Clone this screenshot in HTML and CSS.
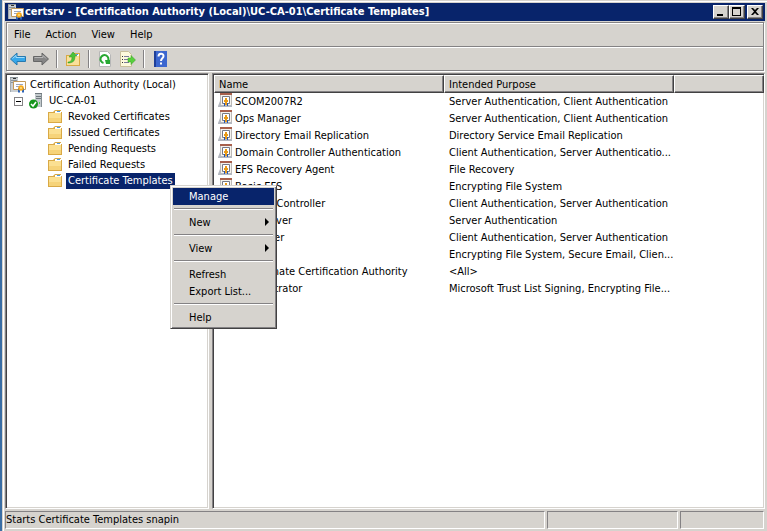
FILE: index.html
```
<!DOCTYPE html>
<html lang="en">
<head>
    <meta charset="UTF-8">
    <meta name="viewport" content="width=device-width, initial-scale=1.0">
    <title>certsrv</title>
    <link rel="stylesheet" href="styles.css">
</head>
<body>
    <svg class="defs">
        <symbol id="i-ca" viewBox="0 0 16 16">
            <path d="M0 0h8v15H0z" fill="#c9ced2"/><path d="M0 0h8v1H0zM1 3h6v1H1zM1 5h3v1H1z" fill="#8b949a"/><path d="M3 1h3v1H3z" fill="#333"/><path d="M0 1h1v14H0z" fill="#a2aaaf"/>
            <path d="M3.500 4.500h12v8h-12z" fill="#fff" stroke="#c39a5b"/><path d="M6 7.500h7M6 9.500h3" stroke="#9aa6c0"/>
            <path d="M8 11h2v5l-1-1-1 1zM12 11h2v5l-1-1-1 1z" fill="#2d63b8"/><circle cx="11" cy="11" r="2.800" fill="#f5a81c"/><circle cx="11" cy="11" r="1" fill="#ffe184"/>
        </symbol>
        <symbol id="i-server" viewBox="0 0 16 16">
            <path d="M6 0h7v14H6z" fill="#c3cacd"/><path d="M6 0h7v1H6zM7 3h5v1H7zM7 5h5v1H7z" fill="#70797e"/><path d="M12 1h1v13h-1z" fill="#858e93"/><path d="M10 9h1v2h-1z" fill="#4ad24a"/>
            <circle cx="4.500" cy="11" r="4.500" fill="#15951c"/><path d="M2 11l2 2 3-4" stroke="#fff" stroke-width="1.500" fill="none"/>
        </symbol>
        <symbol id="i-folder" viewBox="0 0 16 16">
            <path d="M0 3h5l2-2h6v2h1v11H0z" fill="#d9a945"/><path d="M1 4h12v9H1z" fill="#fbe092"/><path d="M1 9h12v4H1z" fill="#f6d379"/><path d="M7 2h6v2H7z" fill="#fff"/><path d="M9 2h3v1H9z" fill="#4d9be0"/>
        </symbol>
        <symbol id="i-template" viewBox="0 0 14 16">
            <path d="M2 1h12v12H2z" fill="#f4f2ee"/><path d="M2 1h1v11H2zM13 1h1v12h-1z" fill="#bdb9b6"/><path d="M2 0h12v2H2z" fill="#a8604c"/><path d="M0 13l2-5v4h12v2H0z" fill="#b4b8c0"/><path d="M4.500 3.500h7v7h-7z" fill="#fff" stroke="#777a86"/><path d="M6 10h1v3H6zM9 10h1v3H9z" fill="#2857b0"/><path d="M7 5h2v2h1v2H9v3H7V9H6V7h1z" fill="#e89a16"/>
        </symbol>
        <symbol id="i-back" viewBox="0 0 16 16"><path d="M.500 8L7 2v3.500h8.500v5H7V14z" fill="#36a7ea" stroke="#2879ae"/><path d="M2.500 7.500L6 4.500v2h8.500" fill="none" stroke="#a2dcfa"/></symbol>
        <symbol id="i-next" viewBox="0 0 16 16"><path d="M15.500 8L9 2v3.500H.500v5H9V14z" fill="#858585" stroke="#666"/><path d="M1.500 6.500H10v-2l3 3" fill="none" stroke="#b8b8b8"/></symbol>
        <symbol id="i-up" viewBox="0 0 16 16"><path d="M1 4h7l1-2h6v13H1z" fill="#d9a945"/><path d="M2 5h12v9H2z" fill="#fae09a"/><path d="M10 3h4v2h-4z" fill="#fff"/><path d="M11 3h2v1h-2z" fill="#4d9be0"/><path d="M3 11c3 0 4-2 4-5H4L8 1l4 4H10c0 5-2 7-7 7z" fill="#4cc237" stroke="#2f9424" stroke-width=".5"/></symbol>
        <symbol id="i-refresh" viewBox="0 0 16 16"><path d="M2.500.500h8l3 3v12h-11z" fill="#fff" stroke="#b7b7b7"/><path d="M6.500 12A4 4 0 1 1 11 10" fill="none" stroke="#28a832" stroke-width="2"/><path d="M8 9h5v4H9z" fill="#28a832"/></symbol>
        <symbol id="i-export" viewBox="0 0 16 16"><path d="M.500.500h8l3 3v12h-11z" fill="#fdf9dd" stroke="#c9bf9c"/><path d="M2 5h1v1H2zM2 8h1v1H2zM2 11h1v1H2z" fill="#333"/><path d="M4 5.500h5M4 8.500h4M4 11.500h5" stroke="#7c7c9c"/><path d="M8 7h3V4.500L15.500 9 11 13.500V11H8z" fill="#58cf3d" stroke="#369c27" stroke-width=".5"/></symbol>
        <symbol id="i-help" viewBox="0 0 16 16"><path d="M2 0h13v16H2z" fill="#3b66cf"/><path d="M2 0h2v16H2z" fill="#1f3f98"/><path d="M6.500 5.500c0-3.500 5-3.500 5-.5C11.500 7.500 9 7 9 10" fill="none" stroke="#fff" stroke-width="2"/><path d="M8 11.500h2v2H8z" fill="#fff"/></symbol>
    </svg>

    <div class="window">
        <header class="titlebar">
            <svg class="icon"><use href="#i-ca"/></svg>
            <h1>certsrv - [Certification Authority (Local)\UC-CA-01\Certificate Templates]</h1>
            <div class="controls">
                <button aria-label="Minimize"><svg viewBox="0 0 12 10"><path d="M2 7h6v2H2z"/></svg></button>
                <button aria-label="Maximize"><svg viewBox="0 0 12 10"><path d="M1 0h9v9H1zM2 2v6h7V2z" fill-rule="evenodd"/></svg></button>
                <button class="close" aria-label="Close"><svg viewBox="0 0 12 10"><path d="M2 1h2l2 2 2-2h2L7 4.500 10 8H8L6 6 4 8H2l3-3.500z"/></svg></button>
            </div>
        </header>

        <div class="bars">
            <nav class="menubar">
                <button>File</button>
                <button>Action</button>
                <button>View</button>
                <button>Help</button>
            </nav>
            <div class="toolbar">
                <button aria-label="Back"><svg class="icon"><use href="#i-back"/></svg></button>
                <button aria-label="Forward"><svg class="icon"><use href="#i-next"/></svg></button>
                <i class="sep"></i>
                <button aria-label="Up one level"><svg class="icon"><use href="#i-up"/></svg></button>
                <i class="sep"></i>
                <button aria-label="Refresh"><svg class="icon"><use href="#i-refresh"/></svg></button>
                <button aria-label="Export List"><svg class="icon"><use href="#i-export"/></svg></button>
                <i class="sep"></i>
                <button aria-label="Help"><svg class="icon"><use href="#i-help"/></svg></button>
            </div>
        </div>

        <main class="panes">
            <div class="pane tree">
                <ul>
                    <li class="root"><svg class="icon"><use href="#i-ca"/></svg><span>Certification Authority (Local)</span></li>
                    <li class="server"><button class="toggle" aria-label="Collapse"></button><svg class="icon"><use href="#i-server"/></svg><span>UC-CA-01</span></li>
                    <li class="folder"><svg class="icon"><use href="#i-folder"/></svg><span>Revoked Certificates</span></li>
                    <li class="folder"><svg class="icon"><use href="#i-folder"/></svg><span>Issued Certificates</span></li>
                    <li class="folder"><svg class="icon"><use href="#i-folder"/></svg><span>Pending Requests</span></li>
                    <li class="folder"><svg class="icon"><use href="#i-folder"/></svg><span>Failed Requests</span></li>
                    <li class="folder selected"><svg class="icon"><use href="#i-folder"/></svg><span>Certificate Templates</span>
                        <div class="menu">
                            <button class="on">Manage</button>
                            <hr>
                            <button class="sub">New</button>
                            <hr>
                            <button class="sub">View</button>
                            <hr>
                            <button>Refresh</button>
                            <button>Export List...</button>
                            <hr>
                            <button>Help</button>
                        </div>
                    </li>
                </ul>
            </div>
            <div class="pane list">
                <table>
                    <thead>
                        <tr><th class="name">Name</th><th class="purpose">Intended Purpose</th><th></th></tr>
                    </thead>
                    <tbody>
                        <tr><td><svg class="icon"><use href="#i-template"/></svg>SCOM2007R2</td><td>Server Authentication, Client Authentication</td><td></td></tr>
                        <tr><td><svg class="icon"><use href="#i-template"/></svg>Ops Manager</td><td>Server Authentication, Client Authentication</td><td></td></tr>
                        <tr><td><svg class="icon"><use href="#i-template"/></svg>Directory Email Replication</td><td>Directory Service Email Replication</td><td></td></tr>
                        <tr><td><svg class="icon"><use href="#i-template"/></svg>Domain Controller Authentication</td><td>Client Authentication, Server Authenticatio...</td><td></td></tr>
                        <tr><td><svg class="icon"><use href="#i-template"/></svg>EFS Recovery Agent</td><td>File Recovery</td><td></td></tr>
                        <tr><td><svg class="icon"><use href="#i-template"/></svg>Basic EFS</td><td>Encrypting File System</td><td></td></tr>
                        <tr><td><svg class="icon"><use href="#i-template"/></svg>Domain Controller</td><td>Client Authentication, Server Authentication</td><td></td></tr>
                        <tr><td><svg class="icon"><use href="#i-template"/></svg>Web Server</td><td>Server Authentication</td><td></td></tr>
                        <tr><td><svg class="icon"><use href="#i-template"/></svg>Computer</td><td>Client Authentication, Server Authentication</td><td></td></tr>
                        <tr><td><svg class="icon"><use href="#i-template"/></svg>User</td><td>Encrypting File System, Secure Email, Clien...</td><td></td></tr>
                        <tr><td><svg class="icon"><use href="#i-template"/></svg>Subordinate Certification Authority</td><td>&lt;All&gt;</td><td></td></tr>
                        <tr><td><svg class="icon"><use href="#i-template"/></svg>Administrator</td><td>Microsoft Trust List Signing, Encrypting File...</td><td></td></tr>
                    </tbody>
                </table>
            </div>
        </main>

        <footer class="status">
            <div class="message">Starts Certificate Templates snapin</div>
            <div class="part"></div>
            <div class="part last"></div>
        </footer>
    </div>
</body>
</html>
```
FILE: styles.css
```
*{box-sizing: border-box;margin: 0;padding: 0;}
body{font: 11px/16px "DejaVu Sans Condensed", "DejaVu Sans", sans-serif;color: #000;background: #d6d3ce;}
button{font: inherit;color: inherit;background: none;border: 0;text-align: left;}
ul{list-style: none;}
.defs{display: none;}
.icon{width: 16px;height: 16px;flex: none;}
.window{display: flex;flex-direction: column;height: 100vh;padding: 3px 2px 2px 3px;border-left: 2px solid #3a6ea5;box-shadow: inset 1px 1px #d6d3ce, inset 2px 2px #fff;}

.titlebar{display: flex;align-items: center;height: 18px;padding: 0 2px 0 3px;background: #08246b;color: #fff;flex: none;}
.titlebar h1{flex: 1;font-size: 11px;line-height: 18px;white-space: nowrap;overflow: hidden;padding-left: 1px;}
.controls{display: flex;}
.controls button{width: 16px;height: 14px;background: #d6d3ce;border: 1px solid;border-color: #fff #424142 #424142 #fff;box-shadow: inset -1px -1px #848284;padding: 1px;}
.controls svg{display: block;width: 12px;height: 10px;}
.controls .close{margin-left: 2px;}

.bars{margin: 1px 1px 2px 1px;border: 1px solid #848284;box-shadow: inset 1px 1px #fff, 1px 1px #fff;flex: none;}
.menubar{display: flex;height: 24px;padding-top: 1px;border-bottom: 1px solid #848284;}
.menubar button{padding: 0 8px 0 7px;}
.toolbar{display: flex;align-items: center;height: 23px;padding-left: 3px;gap: 7px;border-top: 1px solid #fff;}
.toolbar button,.toolbar .icon{display: block;width: 16px;height: 16px;}
.sep{width: 2px;height: 18px;border-left: 1px solid #848284;border-right: 1px solid #fff;}

.panes{display: flex;flex: 1;gap: 3px;margin-bottom: 2px;min-height: 0;}
.pane{background: #fff;border: 1px solid;border-color: #848284 #fff #fff #848284;box-shadow: inset 1px 1px #424142, inset -1px -1px #d6d3ce;padding: 3px 1px 1px 2px;}
.tree{flex: 0 0 204px;}
.tree li{display: flex;align-items: center;height: 16px;position: relative;}
.tree span{padding: 0 2px;height: 16px;line-height: 15px;white-space: nowrap;}
.root{padding-left: 2px;}
.server{padding-left: 6px;}
.folder{padding-left: 40px;}
.tree .icon{margin-right: 2px;}
.toggle{width: 9px;height: 9px;margin-right: 6px;border: 1px solid #848284;background: linear-gradient(#000, #000) center/5px 1px no-repeat;}
.selected span{background: #08246b;color: #fff;}

.menu{position: absolute;left: 162px;top: 12px;z-index: 2;width: 107px;padding: 2px;background: #d6d3ce;border: 1px solid;border-color: #d6d3ce #424142 #424142 #d6d3ce;box-shadow: inset 1px 1px #fff, inset -1px -1px #848284;}
.menu button{display: block;width: 100%;height: 17px;padding-left: 16px;position: relative;}
.menu hr{height: 2px;margin: 3px 1px 4px;border: 0;border-top: 1px solid #848284;border-bottom: 1px solid #fff;}
.menu .on{background: #08246b;color: #fff;}
.sub::after{content: "";position: absolute;right: 5px;top: 4px;border-left: 4px solid #000;border-top: 4px solid transparent;border-bottom: 4px solid transparent;}

.list{flex: 1;min-width: 0;overflow: hidden;padding: 1px 0 1px 1px;}
.list table{width: 100%;border-collapse: separate;border-spacing: 0;table-layout: fixed;}
.list th{height: 18px;font-weight: normal;text-align: left;line-height: 15px;padding: 1px 0 0 4px;background: #d6d3ce;border: 1px solid;border-color: #fff #424142 #424142 #fff;box-shadow: inset -1px -1px #848284;}
.list .name,.list .purpose{width: 230px;}
.list td{height: 17px;padding: 1px 0 0 5px;line-height: 16px;white-space: nowrap;}
.list td:first-child{padding-left: 4px;}
.list .icon{float: left;width: 14px;height: 16px;margin: -1px 3px 0 0;}

.status{display: flex;gap: 2px;height: 18px;padding-right: 1px;flex: none;}
.status div{border: 1px solid;border-color: #848284 #fff #fff #848284;}
.message{flex: 1;}
.part{width: 131px;}
.last{width: 84px;}
```
